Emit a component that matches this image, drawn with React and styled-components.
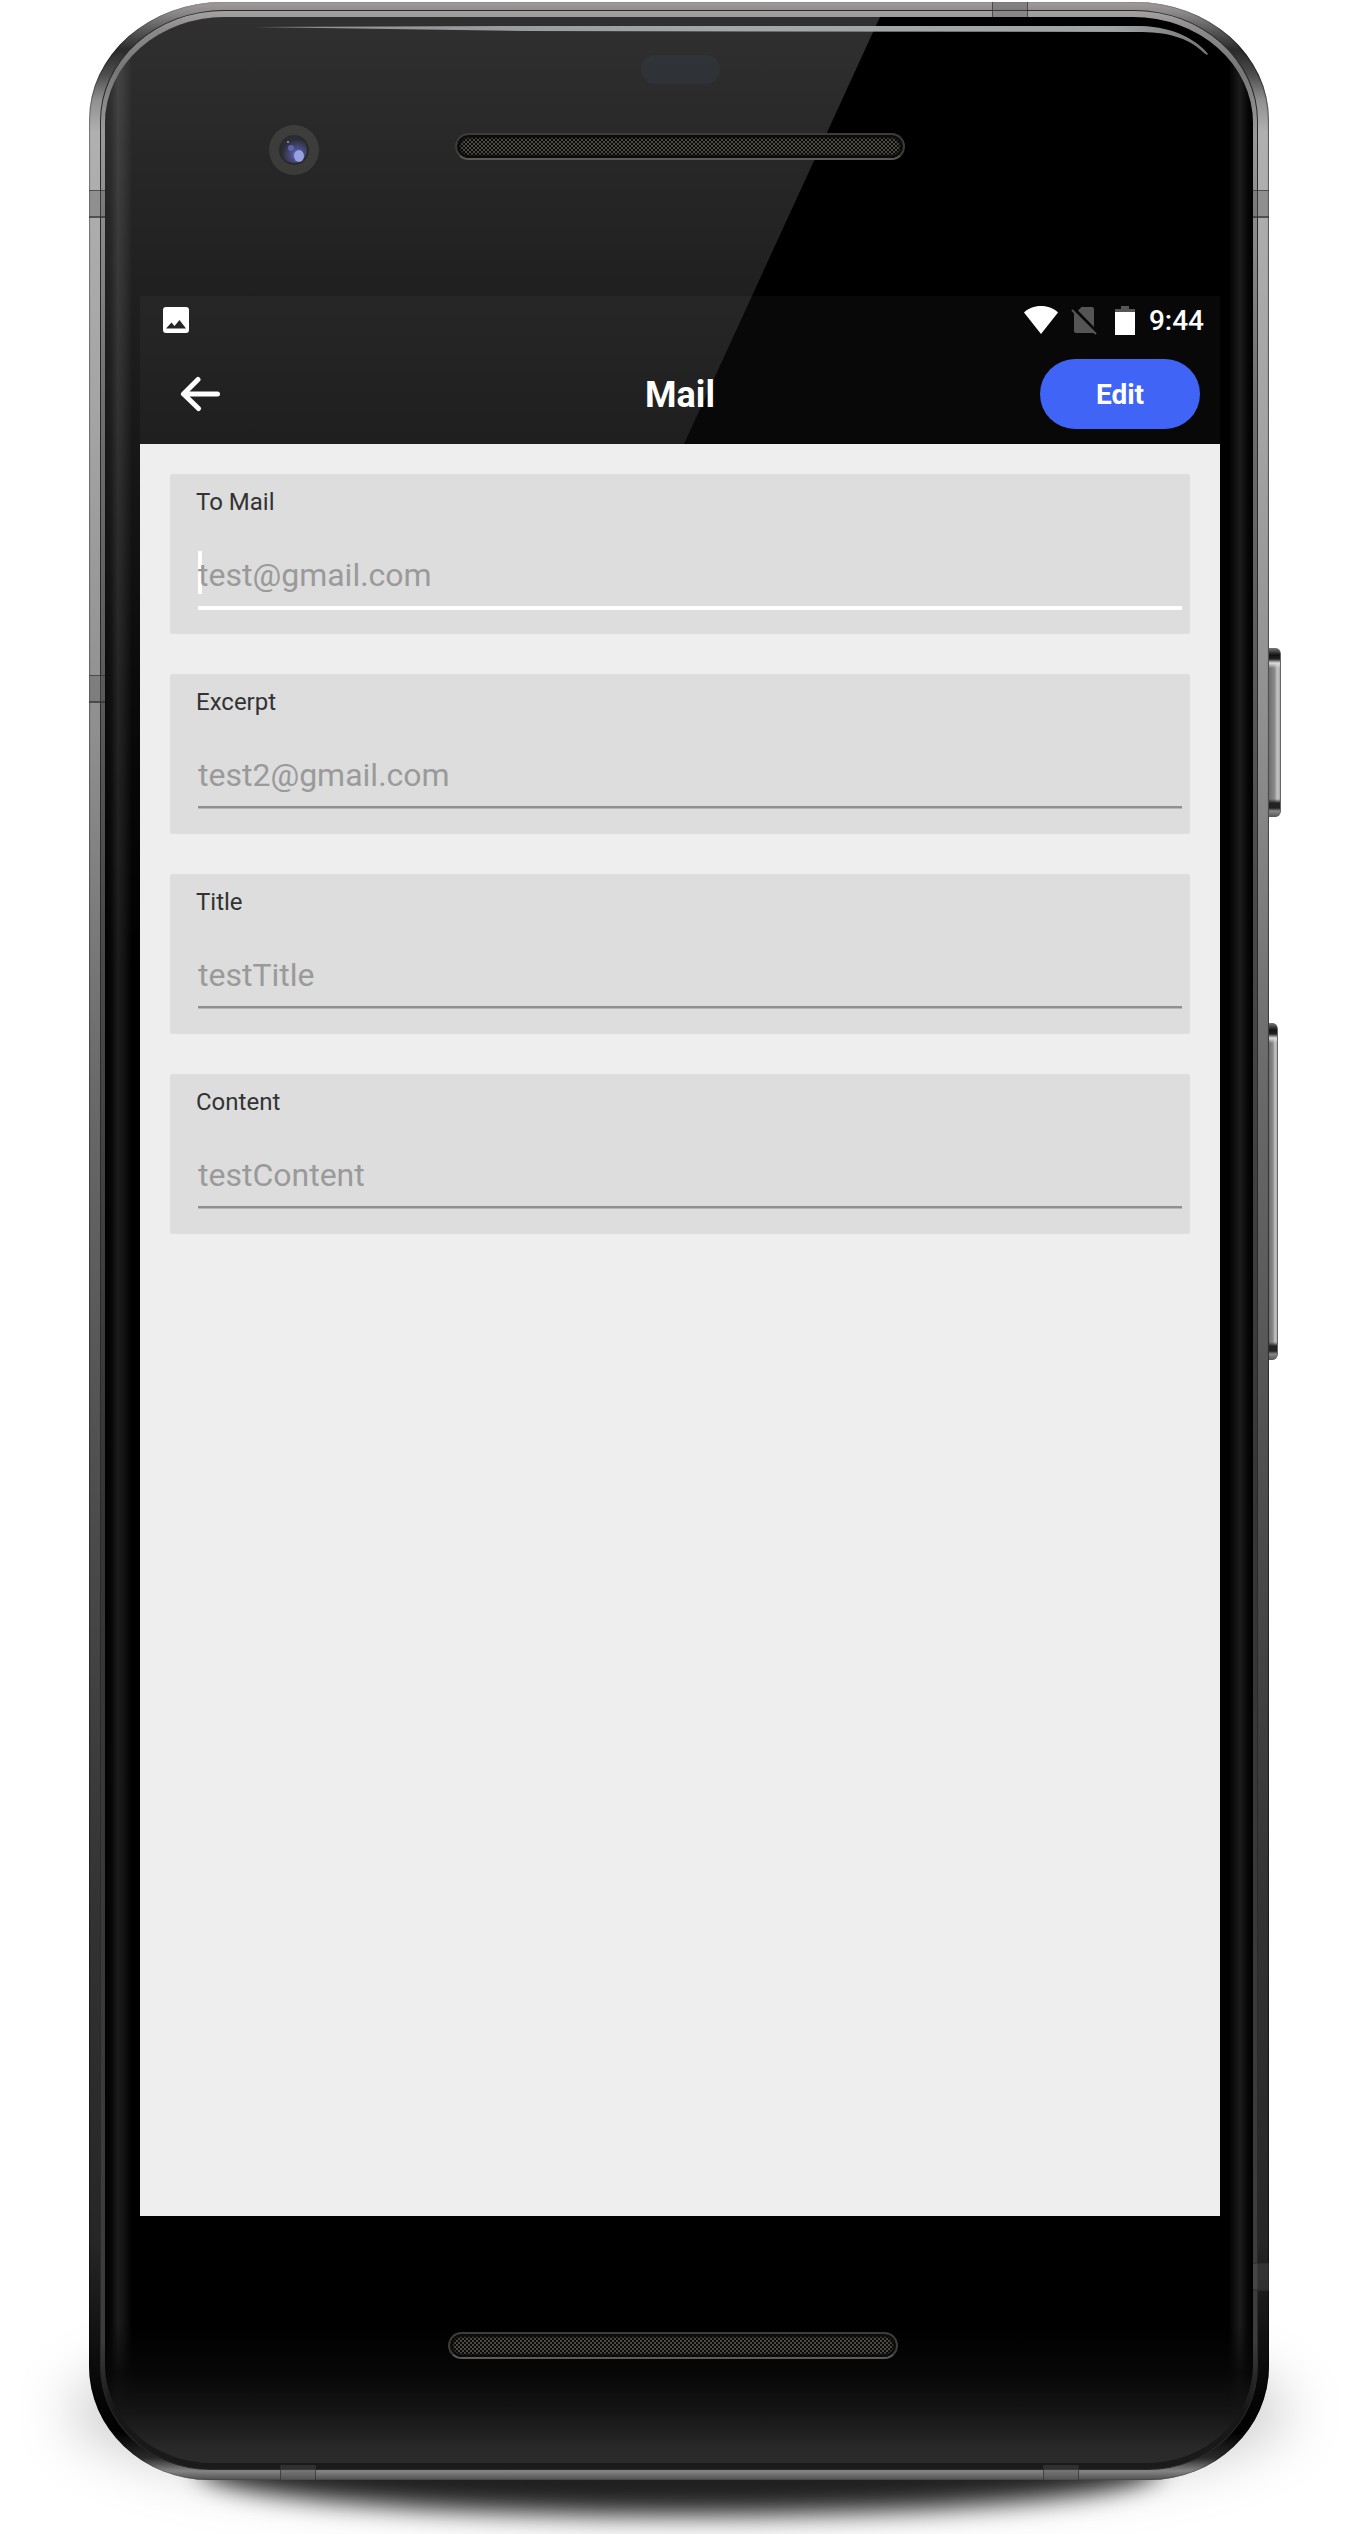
import React from 'react';
import styled, { createGlobalStyle, css } from 'styled-components';

const GlobalStyle = createGlobalStyle`
  *, *::before, *::after { box-sizing: border-box; }
  body { margin: 0; background: #fff; font-family: Roboto, "Liberation Sans", sans-serif; }
`;

const Page = styled.div`
  position: relative;
  padding: 2px 101px 54px 89px;
  overflow: hidden;
`;

/* ---------- device ---------- */

const Device = styled.div`
  position: relative;
  isolation: isolate;
`;

const Shadow = styled.div`
  position: absolute;
  z-index: -1;
  left: ${(p) => p.$inset}px;
  right: ${(p) => p.$inset}px;
  bottom: ${(p) => p.$bottom}px;
  height: ${(p) => p.$height}px;
  border-radius: 50%;
  background: rgba(0, 0, 0, ${(p) => p.$alpha});
  filter: blur(${(p) => p.$blur}px);
`;

const Frame = styled.div`
  position: relative;
  padding: 8px 11px 10px;
  border-radius: 134px 134px 120px 120px / 118px 118px 114px 114px;
  overflow: hidden;
  background: linear-gradient(
    180deg,
    #a09a9b 0,
    #8d8a8a 10px,
    #5a5a5a 28px,
    #2a2a2a 48px,
    #4c4c4c 72px,
    #909090 98px,
    #b0b0b0 130px,
    #a4a4a4 420px,
    #8e8e8e 740px,
    #6a6a6a 1080px,
    #4d4d4d 1500px,
    #333 1900px,
    #262626 2240px,
    #0c0c0c 2360px,
    #000 2430px,
    #2a2a2a 2456px,
    #858585 2469px,
    #505050 2478px
  );
  box-shadow: inset 1px 0 1px rgba(0, 0, 0, 0.35), inset -1px 0 1px rgba(0, 0, 0, 0.5);
`;

const Rim = styled.div`
  padding: 6px 4px;
  border: 1px solid #2a2a2a;
  border-radius: 124px 124px 110px 110px / 111px 111px 104px 104px;
  background: linear-gradient(
    180deg,
    #a5a1a1 0,
    #8a8a8a 20px,
    #777 60px,
    #999 120px,
    #6e6e6e 400px,
    #4a4a4a 900px,
    #363636 1500px,
    #3c3c3c 2200px,
    #3c3c3c 2330px,
    #161616 2400px,
    #1b1b1b 100%
  );
`;

const Glass = styled.div`
  position: relative;
  padding: 0 33px 0 35px;
  border-radius: 120px 120px 106px 106px / 106px 106px 98px 98px;
  overflow: hidden;
  background:
    linear-gradient(0deg, #2b2b2b 0, #292929 14px, #151515 50px, rgba(8, 8, 8, 0.8) 90px, rgba(0, 0, 0, 0) 140px),
    linear-gradient(90deg, #000 0, #060606 6px, #1c1c1c 13px, #141414 18px, #000 27px, #000 calc(100% - 24px), #1c1c1c calc(100% - 13px), #060606 calc(100% - 5px), #000 100%);
`;

const Gloss = styled.div`
  position: absolute;
  z-index: 1;
  inset: 0;
  pointer-events: none;
  clip-path: polygon(0 0, 775px 0, 0 1688px);
  background: linear-gradient(
    180deg,
    rgba(255, 255, 255, 0.19) 0,
    rgba(255, 255, 255, 0.155) 130px,
    rgba(255, 255, 255, 0.12) 290px,
    rgba(255, 255, 255, 0.09) 440px,
    rgba(255, 255, 255, 0.04) 680px,
    rgba(255, 255, 255, 0) 960px
  );
`;

const EdgeLight = styled.svg`
  position: absolute;
  z-index: 2;
  top: 0;
  left: 0;
  width: 100%;
  height: auto;
  pointer-events: none;
`;

const Antenna = styled.span`
  position: absolute;
  z-index: 2;
  background: rgba(90, 90, 90, 0.35);
  ${(p) =>
    p.$side === 'left' || p.$side === 'right'
      ? css`
          ${p.$side}: 0;
          top: ${p.$at}px;
          width: 16px;
          height: 28px;
          border: solid rgba(40, 40, 40, 0.6);
          border-width: 1px 0 2px;
        `
      : css`
          ${p.$side}: 0;
          left: ${p.$at}px;
          width: 36px;
          height: 15px;
          border: solid rgba(40, 40, 40, 0.6);
          border-width: 0 1px;
        `}
`;

const SideKey = styled.span`
  position: absolute;
  top: ${(p) => p.$top}px;
  left: 100%;
  width: ${(p) => p.$width}px;
  height: ${(p) => p.$height}px;
  border-radius: 0 6px 6px 0;
  border-right: 1px solid #666;
  background:
    linear-gradient(180deg, #777 0, #111 7px, #222 11px, #ddd 15px, rgba(200, 200, 200, 0) 20px, rgba(200, 200, 200, 0) calc(100% - 18px), #222 calc(100% - 14px), #222 calc(100% - 9px), #888 calc(100% - 6px), #555 100%),
    linear-gradient(90deg, #6e6e6e 0, #8a8a8a 50%, #c4c4c4 75%, #aaa 100%);
`;

const TopBezel = styled.div`
  display: flex;
  flex-direction: column;
  align-items: center;
  gap: 41px;
  height: 279px;
  padding-top: 38px;
`;

const Sensor = styled.div`
  width: 79px;
  height: 29px;
  border-radius: 15px;
  background: #03070c;
`;

const BezelRow = styled.div`
  display: grid;
  grid-template-columns: 1fr 450px 1fr;
  align-items: start;
  width: 100%;
`;

const CameraSlot = styled.div`
  display: flex;
  justify-content: center;
  padding-right: 8px;
`;

const SpeakerSlot = styled.div`
  padding-top: 8px;
`;

const Speaker = styled.div`
  position: relative;
  z-index: 2;
  width: 450px;
  height: 27px;
  border: 2px solid #3c3c3a;
  border-bottom-color: #5a5a58;
  border-radius: 14px;
  box-shadow: inset 0 0 2px 3px #0c0c0b;
  background:
    radial-gradient(circle at 1px 1px, #4c4a44 0, #4c4a44 1px, transparent 1px) 0 0 / 4px 4px,
    radial-gradient(circle at 1px 1px, #4c4a44 0, #4c4a44 1px, transparent 1px) 2px 2px / 4px 4px,
    #0c0b09;
`;

const Chin = styled.div`
  display: flex;
  justify-content: center;
  height: 247px;
  padding: 116px 14px 0 0;
`;

/* ---------- app screen ---------- */

const Screen = styled.div`
  display: flex;
  flex-direction: column;
  aspect-ratio: 9 / 16;
`;

const TopArea = styled.header`
  background: #080808;
  color: #fff;
`;

const StatusBar = styled.div`
  display: flex;
  align-items: center;
  justify-content: space-between;
  height: 48px;
  padding: 0 16px 0 23px;
`;

const StatusIcons = styled.div`
  display: flex;
  align-items: center;
`;

const Icon = styled.svg`
  display: block;
  margin-right: ${(p) => p.$after || 0}px;
`;

const Clock = styled.time`
  padding-top: 2px;
  font-size: 28px;
  font-weight: 500;
  line-height: 32px;
`;

const AppBar = styled.div`
  display: grid;
  grid-template-columns: 1fr auto 1fr;
  align-items: center;
  height: 100px;
  padding: 0 20px 0 40px;
`;

const BackButton = styled.button`
  justify-self: start;
  padding: 0;
  border: 0;
  background: none;
  color: inherit;
`;

const Title = styled.h1`
  margin: 0 20px 0 0;
  padding-top: 2px;
  font-size: 36px;
  font-weight: 700;
  line-height: 42px;
`;

const EditButton = styled.button`
  justify-self: end;
  width: 160px;
  height: 70px;
  padding: 2px 0 0;
  border: 0;
  border-radius: 35px;
  background: #4065f6;
  color: #fff;
  font: 700 28px/32px Roboto, sans-serif;
`;

const Form = styled.form`
  position: relative;
  z-index: 2;
  display: flex;
  flex: 1;
  flex-direction: column;
  gap: 40px;
  padding: 30px;
  background: #eee;
`;

const Card = styled.div`
  display: flex;
  flex-direction: column;
  gap: 27px;
  height: 160px;
  padding: 14px 8px 0 26px;
  border-radius: 2px;
  background: #ddd;
`;

const Label = styled.label`
  color: #333;
  font-size: 24px;
  line-height: 28px;
`;

const InputWrap = styled.div`
  position: relative;
  margin-left: 2px;
`;

const Caret = styled.span`
  position: absolute;
  top: 8px;
  left: 0;
  width: 4px;
  height: 43px;
  background: #fff;
`;

const Input = styled.input`
  position: relative;
  display: block;
  box-sizing: content-box;
  width: 100%;
  height: 63px;
  padding: 0;
  border: 0;
  border-bottom: ${(p) => (p.$active ? '4px solid #fff' : '2px solid #8f8f8f')};
  border-radius: 0;
  outline: 0;
  box-shadow: ${(p) => (p.$active ? 'none' : '0 1px #b8b8b8')};
  background: transparent;
  color: #333;
  font: 400 32px/38px Roboto, sans-serif;

  &::placeholder {
    color: #9a9a9a;
    opacity: 1;
  }
`;

const FIELDS = [
  { id: 'to', label: 'To Mail', hint: 'test@gmail.com', active: true },
  { id: 'excerpt', label: 'Excerpt', hint: 'test2@gmail.com' },
  { id: 'title', label: 'Title', hint: 'testTitle' },
  { id: 'content', label: 'Content', hint: 'testContent' },
];

function Field({ id, label, hint, active }) {
  return (
    <Card>
      <Label htmlFor={id}>{label}</Label>
      <InputWrap>
        {active && <Caret />}
        <Input id={id} type="text" placeholder={hint} $active={active} />
      </InputWrap>
    </Card>
  );
}

function Camera() {
  return (
    <svg width="50" height="50" viewBox="0 0 50 50" aria-hidden="true">
      <defs>
        <radialGradient id="lens" cx="0.62" cy="0.68" r="0.6">
          <stop offset="0" stopColor="#6874c8" />
          <stop offset="0.35" stopColor="#2b3174" />
          <stop offset="1" stopColor="#04050e" />
        </radialGradient>
      </defs>
      <circle cx="25" cy="25" r="25" fill="#181817" />
      <circle cx="25" cy="25" r="15" fill="#020204" />
      <circle cx="25" cy="25" r="13" fill="url(#lens)" />
      <ellipse cx="30" cy="31" rx="5" ry="6" fill="#8490dc" />
      <circle cx="22" cy="23" r="3" fill="#4048a0" />
      <circle cx="19" cy="17" r="1" fill="#8088c0" />
    </svg>
  );
}

function Phone({ children }) {
  return (
    <Device>
      <Shadow $inset={-20} $bottom={-26} $height={190} $alpha={0.2} $blur={28} />
      <Shadow $inset={110} $bottom={-34} $height={90} $alpha={0.85} $blur={12} />
      <SideKey $top={646} $width={12} $height={169} />
      <SideKey $top={1021} $width={9} $height={337} />
      <Frame>
        <Antenna $side="top" $at={903} />
        <Antenna $side="left" $at={188} />
        <Antenna $side="right" $at={188} />
        <Antenna $side="left" $at={673} />
        <Antenna $side="right" $at={2261} />
        <Antenna $side="bottom" $at={191} />
        <Antenna $side="bottom" $at={954} />
        <Rim>
          <Glass>
            <Gloss />
            <EdgeLight viewBox="0 0 1148 60" aria-hidden="true">
              <defs>
                <linearGradient id="edge" x1="0" x2="1" y1="0" y2="0">
                  <stop offset="0" stopColor="#8d9090" />
                  <stop offset="0.5" stopColor="#a4a8a8" />
                  <stop offset="0.9" stopColor="#a0a4a4" />
                  <stop offset="1" stopColor="#777" />
                </linearGradient>
              </defs>
              <path
                fill="url(#edge)"
                d="M145 10 L400 9 H1036 C1070 10 1093 24 1103 37 Q1102 39 1098 35 C1082 20 1062 15 1032 15 L420 14 Z"
              />
            </EdgeLight>
            <TopBezel>
              <Sensor />
              <BezelRow>
                <CameraSlot>
                  <Camera />
                </CameraSlot>
                <SpeakerSlot>
                  <Speaker />
                </SpeakerSlot>
              </BezelRow>
            </TopBezel>
            {children}
            <Chin>
              <Speaker />
            </Chin>
          </Glass>
        </Rim>
      </Frame>
    </Device>
  );
}

export default function App() {
  return (
    <>
      <GlobalStyle />
      <Page>
        <Phone>
          <Screen>
            <TopArea>
              <StatusBar>
                <Icon width="26" height="26" viewBox="0 0 26 26" aria-hidden="true">
                  <path
                    fill="#fff"
                    fillRule="evenodd"
                    d="M3 0H23A3 3 0 0 1 26 3V23A3 3 0 0 1 23 26H3A3 3 0 0 1 0 23V3A3 3 0 0 1 3 0ZM3 21.500H23L16.500 13L11.500 19L8.500 15.500Z"
                  />
                </Icon>
                <StatusIcons>
                  <Icon $after={13} width="34" height="28" viewBox="0 0 34 28" aria-hidden="true">
                    <path fill="#fff" d="M17 28L0 6.500C4 2.500 10 0 17 0S30 2.500 34 6.500Z" />
                  </Icon>
                  <Icon $after={18} width="26" height="29" viewBox="0 0 26 29" aria-hidden="true">
                    <path fill="#555" d="M7 4.500L10.500 1H21Q23 1 23 3V21ZM3 6L23 26V27H5Q3 27 3 25Z" />
                    <path stroke="#555" strokeWidth="2" d="M1 4L25 28" />
                  </Icon>
                  <Icon $after={14} width="20" height="29" viewBox="0 0 20 29" aria-hidden="true">
                    <path fill="#555" d="M6 0H14V3H20V7H0V3H6Z" />
                    <path fill="#fff" d="M0 6H20V29H0Z" />
                  </Icon>
                  <Clock>9:44</Clock>
                </StatusIcons>
              </StatusBar>
              <AppBar>
                <BackButton type="button" aria-label="Back">
                  <Icon width="40" height="36" viewBox="0 0 40 36" fill="none" aria-hidden="true">
                    <path
                      stroke="#fff"
                      strokeWidth="5"
                      strokeLinecap="round"
                      strokeLinejoin="round"
                      d="M18 3.500L3.500 18L18.500 32.500M3.500 18H37.500"
                    />
                  </Icon>
                </BackButton>
                <Title>Mail</Title>
                <EditButton type="button">Edit</EditButton>
              </AppBar>
            </TopArea>
            <Form>
              {FIELDS.map((f) => (
                <Field key={f.id} {...f} />
              ))}
            </Form>
          </Screen>
        </Phone>
      </Page>
    </>
  );
}
